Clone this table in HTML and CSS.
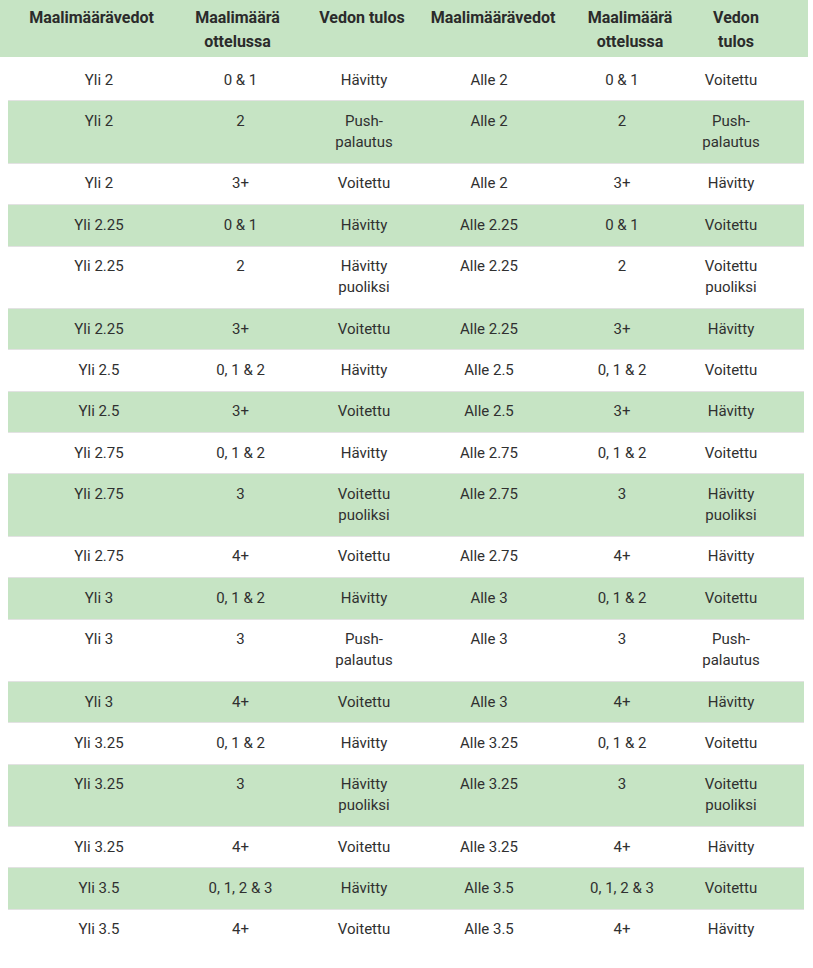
FILE: index.html
```
<!DOCTYPE html>
<html lang="fi">
<head>
<meta charset="utf-8">
<title>Maalimäärävedot</title>
<link rel="stylesheet" href="styles.css">
</head>
<body>
<table class="head">
  <colgroup>
    <col class="h1"><col class="h2"><col class="h3"><col class="h4"><col class="h5"><col class="h6">
  </colgroup>
  <thead>
    <tr>
      <th>Maalimäärävedot</th>
      <th>Maalimäärä ottelussa</th>
      <th>Vedon tulos</th>
      <th>Maalimäärävedot</th>
      <th>Maalimäärä ottelussa</th>
      <th>Vedon tulos</th>
    </tr>
  </thead>
</table>
<table class="data">
  <colgroup>
    <col class="d1"><col class="d2"><col class="d3"><col class="d4"><col class="d5"><col class="d6">
  </colgroup>
  <tbody>
    <tr><td>Yli 2</td><td>0 &amp; 1</td><td>Hävitty</td><td>Alle 2</td><td>0 &amp; 1</td><td>Voitettu</td></tr>
    <tr><td>Yli 2</td><td>2</td><td>Push-palautus</td><td>Alle 2</td><td>2</td><td>Push-palautus</td></tr>
    <tr><td>Yli 2</td><td>3+</td><td>Voitettu</td><td>Alle 2</td><td>3+</td><td>Hävitty</td></tr>
    <tr><td>Yli 2.25</td><td>0 &amp; 1</td><td>Hävitty</td><td>Alle 2.25</td><td>0 &amp; 1</td><td>Voitettu</td></tr>
    <tr><td>Yli 2.25</td><td>2</td><td>Hävitty puoliksi</td><td>Alle 2.25</td><td>2</td><td>Voitettu puoliksi</td></tr>
    <tr><td>Yli 2.25</td><td>3+</td><td>Voitettu</td><td>Alle 2.25</td><td>3+</td><td>Hävitty</td></tr>
    <tr><td>Yli 2.5</td><td>0, 1 &amp; 2</td><td>Hävitty</td><td>Alle 2.5</td><td>0, 1 &amp; 2</td><td>Voitettu</td></tr>
    <tr><td>Yli 2.5</td><td>3+</td><td>Voitettu</td><td>Alle 2.5</td><td>3+</td><td>Hävitty</td></tr>
    <tr><td>Yli 2.75</td><td>0, 1 &amp; 2</td><td>Hävitty</td><td>Alle 2.75</td><td>0, 1 &amp; 2</td><td>Voitettu</td></tr>
    <tr><td>Yli 2.75</td><td>3</td><td>Voitettu puoliksi</td><td>Alle 2.75</td><td>3</td><td>Hävitty puoliksi</td></tr>
    <tr><td>Yli 2.75</td><td>4+</td><td>Voitettu</td><td>Alle 2.75</td><td>4+</td><td>Hävitty</td></tr>
    <tr><td>Yli 3</td><td>0, 1 &amp; 2</td><td>Hävitty</td><td>Alle 3</td><td>0, 1 &amp; 2</td><td>Voitettu</td></tr>
    <tr><td>Yli 3</td><td>3</td><td>Push-palautus</td><td>Alle 3</td><td>3</td><td>Push-palautus</td></tr>
    <tr><td>Yli 3</td><td>4+</td><td>Voitettu</td><td>Alle 3</td><td>4+</td><td>Hävitty</td></tr>
    <tr><td>Yli 3.25</td><td>0, 1 &amp; 2</td><td>Hävitty</td><td>Alle 3.25</td><td>0, 1 &amp; 2</td><td>Voitettu</td></tr>
    <tr><td>Yli 3.25</td><td>3</td><td>Hävitty puoliksi</td><td>Alle 3.25</td><td>3</td><td>Voitettu puoliksi</td></tr>
    <tr><td>Yli 3.25</td><td>4+</td><td>Voitettu</td><td>Alle 3.25</td><td>4+</td><td>Hävitty</td></tr>
    <tr><td>Yli 3.5</td><td>0, 1, 2 &amp; 3</td><td>Hävitty</td><td>Alle 3.5</td><td>0, 1, 2 &amp; 3</td><td>Voitettu</td></tr>
    <tr><td>Yli 3.5</td><td>4+</td><td>Voitettu</td><td>Alle 3.5</td><td>4+</td><td>Hävitty</td></tr>
  </tbody>
</table>
</body>
</html>
```
FILE: styles.css
```
html, body {
  margin: 0;
  padding: 0;
  background: #ffffff;
}

body {
  font-family: Roboto, "Liberation Sans", Arial, sans-serif;
  color: #303030;
}

table {
  border-collapse: collapse;
  table-layout: fixed;
  border-spacing: 0;
}

/* header table */
.head {
  width: 808px;
  background: #c6e4c4;
}

.head .h1 { width: 183px; }
.head .h2 { width: 109px; }
.head .h3 { width: 134px; }
.head .h4 { width: 134px; }
.head .h5 { width: 140px; }
.head .h6 { width: 108px; }

.head th {
  font-size: 16px;
  font-weight: 700;
  line-height: 24px;
  color: #2b2b2b;
  text-align: center;
  vertical-align: top;
  padding: 6px 0 3px 0;
}

.head th:nth-child(3) { padding-left: 6px; }
.head th:nth-child(6) { padding-right: 36px; }

/* data table */
.data {
  width: 796px;
  margin: 3px 0 0 8px;
}

.data .d1 { width: 182px; }
.data .d2 { width: 101px; }
.data .d3 { width: 113px; }
.data .d4 { width: 170px; }
.data .d5 { width: 96px; }
.data .d6 { width: 134px; }

.data td {
  font-size: 15px;
  line-height: 21px;
  text-align: center;
  vertical-align: top;
  padding: 9.7px 0 9.7px 0;
  border-bottom: 1px solid #e2e2e2;
}

.data td:nth-child(3) { padding-left: 33px; }
.data td:nth-child(6) { padding-left: 21px; padding-right: 33px; }

.data tr:nth-child(even) td {
  background: #c6e4c4;
}

.data tr:last-child td {
  border-bottom: 0;
}
```
